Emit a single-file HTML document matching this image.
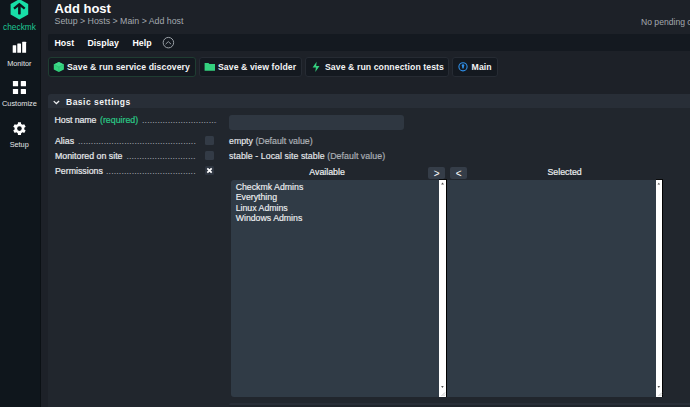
<!DOCTYPE html>
<html><head><meta charset="utf-8">
<style>
*{box-sizing:border-box;margin:0;padding:0}
html,body{width:690px;height:407px;overflow:hidden;background:#1d2128;font-family:"Liberation Sans",sans-serif;color:#e8eaed}
.abs{position:absolute}
#side{left:0;top:0;width:41px;height:407px;background:#0f161c;box-shadow:inset -1px 0 #0b1014}
.sl{position:absolute;left:0;width:40px;text-align:center;font-size:7.5px;color:#e4e6e8;white-space:nowrap}
#title{left:54.6px;top:1px;font-size:13px;font-weight:bold;color:#fff}
#crumb{left:54.6px;top:16px;font-size:8.8px;color:#a3a8ae}
#pending{left:641px;top:17.3px;font-size:8.6px;color:#a3a8ae;white-space:nowrap}
#menu{left:48px;top:34px;width:642px;height:17px;background:#141920;border-radius:2px 0 0 2px}
.mi{position:absolute;top:4.1px;font-size:8.8px;letter-spacing:0.02px;font-weight:bold;color:#fff}
.btn{position:absolute;top:57px;height:20px;background:#141920;border:1px solid #262b33;border-radius:3px}
.bt{position:absolute;top:61.7px;font-size:8.7px;letter-spacing:0.08px;font-weight:bold;color:#f2f3f4;white-space:nowrap}
#sechead{left:48px;top:93.8px;width:642px;height:14.4px;background:#282e37;border-radius:3px 0 0 0}
#content{left:48px;top:108px;width:642px;height:299px;background:#21262d}
.lbl{position:absolute;font-size:8.8px;color:#e8eaed;white-space:nowrap;-webkit-text-stroke:0.2px #e8eaed}
.dots{position:absolute;font-size:8.8px;color:#a3a9b0;white-space:nowrap;overflow:hidden;letter-spacing:0.12px;margin-top:-0.5px}
.cb{position:absolute;left:205px;width:9px;height:9px;background:#333b46;border-radius:1.5px}
.val{position:absolute;left:229px;font-size:8.8px;color:#e8eaed;white-space:nowrap;-webkit-text-stroke:0.15px #e8eaed}
.gray{color:#8f959c}
.list{position:absolute;top:180px;height:217px;background:#303b46}
.sb{position:absolute;top:179px;width:8px;height:218px;background:#fff;border-right:1px solid #000;border-top:1px solid #0a0a0a}
.arr{position:absolute;top:167px;width:17.3px;height:12px;background:#353d48;border-radius:2px;color:#fff;font-size:10px;text-align:center;line-height:14px}
.item{position:absolute;left:235.7px;font-size:8.75px;color:#eef0f2;white-space:nowrap;-webkit-text-stroke:0.15px #eef0f2}
</style></head><body>
<div id="side" class="abs">
  <svg class="abs" style="left:0;top:0" width="40" height="22" viewBox="0 0 40 22">
    <polygon points="19.4,-0.9 28.2,4 28.2,14.6 19.4,19.5 10.6,14.6 10.6,4" fill="#18dfa7"/>
    <polyline points="14.0,8.6 19.35,4.4 24.7,8.6" fill="none" stroke="#0f161c" stroke-width="2.4"/>
    <path d="M18.1 5.5 H20.7 V13.4 Q20.7 14.6 19.4 14.6 Q18.1 14.6 18.1 13.4 Z" fill="#0f161c"/>
  </svg>
  <div class="sl" style="top:22px;left:-0.5px;color:#1ec894;font-size:8.3px;letter-spacing:0.02px">checkmk</div>
  <svg class="abs" style="left:0;top:0" width="40" height="160" viewBox="0 0 40 160">
    <rect x="12.7" y="45.2" width="3.5" height="7.6" rx="0.4" fill="#fff"/>
    <rect x="17.3" y="43.5" width="3.7" height="9.3" rx="0.4" fill="#fff"/>
    <rect x="22.2" y="41.8" width="3.9" height="11" rx="0.4" fill="#fff"/>
    <rect x="12.9" y="81.1" width="5.2" height="5.1" rx="0.5" fill="#fff"/>
    <rect x="20.8" y="81.1" width="5.2" height="5.1" rx="0.5" fill="#fff"/>
    <rect x="12.9" y="88.9" width="5.2" height="5.2" rx="0.5" fill="#fff"/>
    <rect x="20.8" y="88.9" width="5.2" height="5.2" rx="0.5" fill="#fff"/>
    <path fill="#fff" d="M21.13 124.00 L20.91 122.27 L17.99 122.27 L17.77 124.00 L16.30 124.85 L14.70 124.17 L13.23 126.70 L14.62 127.75 L14.62 129.45 L13.23 130.50 L14.70 133.03 L16.30 132.35 L17.77 133.20 L17.99 134.93 L20.91 134.93 L21.13 133.20 L22.60 132.35 L24.20 133.03 L25.67 130.50 L24.28 129.45 L24.28 127.75 L25.67 126.70 L24.20 124.17 L22.60 124.85 Z"/>
    <circle cx="19.45" cy="128.6" r="2.3" fill="#0f161c"/>
  </svg>
  <div class="sl" style="top:59px;left:-0.7px;font-size:7.3px">Monitor</div>
  <div class="sl" style="top:99px;left:-0.6px;font-size:7.4px">Customize</div>
  <div class="sl" style="top:140px;left:-0.8px;font-size:7.3px">Setup</div>
</div>

<div id="title" class="abs">Add host</div>
<div id="crumb" class="abs">Setup &gt; Hosts &gt; Main &gt; Add host</div>
<div id="pending" class="abs">No pending changes</div>

<div id="menu" class="abs">
  <div class="mi" style="left:6.5px">Host</div>
  <div class="mi" style="left:39.5px">Display</div>
  <div class="mi" style="left:84.4px">Help</div>
</div>
<svg class="abs" style="left:0;top:0" width="690" height="110" viewBox="0 0 690 110">
  <circle cx="168.4" cy="42.65" r="5.25" fill="none" stroke="#9aa0a6" stroke-width="1"/>
  <polyline points="165.9,43.9 168.3,41.6 170.8,43.9" fill="none" stroke="#9aa0a6" stroke-width="0.95" stroke-linejoin="round" stroke-linecap="round"/>
</svg>

<div class="btn" style="left:48px;width:148px;border-color:#1f3d32"></div>
<svg class="abs" style="left:0;top:0" width="690" height="80" viewBox="0 0 690 80">
  <polygon points="58.85,62 63.9,64.5 63.9,69.4 58.85,71.9 53.8,69.4 53.8,64.5" fill="#33d27d"/>
  <polygon points="58.85,62 63.9,64.5 58.85,67 53.8,64.5" fill="#3fd98a"/>
  <path d="M53.8 64.5 L58.85 67 L63.9 64.5 M58.85 67 V71.9" stroke="#28b56c" stroke-width="0.6" fill="none"/>
</svg>
<div class="bt" style="left:67px">Save &amp; run service discovery</div>

<div class="btn" style="left:199px;width:103px"></div>

<div class="bt" style="left:218px">Save &amp; view folder</div>

<div class="btn" style="left:305px;width:144px"></div>
<div class="bt" style="left:325px">Save &amp; run connection tests</div>

<div class="btn" style="left:452px;width:46px"></div>
<div class="bt" style="left:471.6px">Main</div>
<svg class="abs" style="left:0;top:0" width="690" height="80" viewBox="0 0 690 80">
  <path d="M204.6 62.9 H208.4 L209.5 64 H215 V70.8 H204.6 Z" fill="#34d17f"/>
  <path d="M316.6 61.8 L312.6 67.5 L315.9 67.5 L315.3 71.9 L319.5 66.1 L316.2 66.1 Z" fill="#34d17f"/>
  <circle cx="463" cy="66.8" r="4.1" fill="none" stroke="#2f8fe8" stroke-width="1.1"/>
  <circle cx="463" cy="65.6" r="1.3" fill="#2f8fe8"/>
  <rect x="462.2" y="65.6" width="1.6" height="2.8" fill="#2f8fe8"/>
</svg>

<div id="content" class="abs"></div>
<div id="sechead" class="abs">
  <svg class="abs" style="left:0;top:0" width="20" height="15" viewBox="48 94 20 15">
    <polyline points="53.75,101.1 56.4,103.6 59.1,101.1" fill="none" stroke="#eef0f2" stroke-width="1.3"/>
  </svg>
  <div class="abs" style="left:18px;top:3px;font-size:8.5px;font-weight:bold;letter-spacing:0.5px;color:#f2f3f4">Basic settings</div>
</div>

<div class="lbl" style="left:54.6px;top:115px;letter-spacing:-0.1px">Host name</div>
<div class="lbl" style="left:100px;top:115px;color:#2bc986;-webkit-text-stroke:0.2px #2bc986">(required)</div>
<div class="dots" style="left:142px;top:115px;width:75px">..................................................</div>
<div class="abs" style="left:229px;top:115px;width:175px;height:15px;background:#2f3741;border-radius:3px"></div>

<div class="lbl" style="left:55px;top:136px">Alias</div>
<div class="dots" style="left:78px;top:136px;width:118px">..........................................................................</div>
<div class="cb" style="top:136px"></div>
<div class="val" style="top:136px">empty <span class="gray">(Default value)</span></div>

<div class="lbl" style="left:55px;top:151px">Monitored on site</div>
<div class="dots" style="left:126.4px;top:151px;width:69.6px">..........................................................................</div>
<div class="cb" style="top:151px"></div>
<div class="val" style="top:151px;letter-spacing:0.05px">stable - Local site stable <span class="gray">(Default value)</span></div>

<div class="lbl" style="left:55px;top:166px">Permissions</div>
<div class="dots" style="left:106px;top:166px;width:90px">..........................................................................</div>
<div class="cb" style="top:165.8px;background:#2e3540"></div>
<svg class="abs" style="left:205px;top:166px" width="9" height="9" viewBox="0 0 9 9">
  <path d="M2.3 2.3 L6.7 6.7 M6.7 2.3 L2.3 6.7" stroke="#fff" stroke-width="1.7"/>
</svg>

<div class="abs" style="left:309.3px;top:167px;font-size:8.8px;color:#eceef0;-webkit-text-stroke:0.2px #eceef0">Available</div>
<div class="abs" style="left:547.5px;top:167px;font-size:8.8px;color:#eceef0;-webkit-text-stroke:0.2px #eceef0">Selected</div>
<div class="arr" style="left:428px">&gt;</div>
<div class="arr" style="left:450px">&lt;</div>

<div class="list" style="left:230.5px;width:209px;border-radius:3px 0 0 3px"></div>
<div class="sb" style="left:439px"></div>
<div class="list" style="left:447px;width:209px"></div>
<div class="sb" style="left:655.7px;width:7.4px"></div>

<svg class="abs" style="left:0;top:170px" width="690" height="237" viewBox="0 170 690 237">
  <polygon points="441.1,184.6 442.55,182.6 444,184.6" fill="#505050"/>
  <polygon points="441.1,386 442.4,387.9 443.7,386" fill="#505050"/>
  <path d="M441.5 396 L445 392.5 M443.5 396 L445 394.5" stroke="#9a9a9a" stroke-width="0.6"/>
  <polygon points="657.5,184.4 658.8,182.8 660.1,184.4" fill="#505050"/>
  <polygon points="657.5,386 658.8,387.9 660.1,386" fill="#505050"/>
  <path d="M658.5 396 L662 392.5 M660.5 396 L662 394.5" stroke="#9a9a9a" stroke-width="0.6"/>
</svg>
<div class="item" style="top:182px">Checkmk Admins</div>
<div class="item" style="top:192px">Everything</div>
<div class="item" style="top:202.5px">Linux Admins</div>
<div class="item" style="top:212.5px">Windows Admins</div>

<div class="abs" style="left:229px;top:402.7px;width:461px;height:2.3px;background:#282e37;border-radius:2px 0 0 0"></div>
<div class="abs" style="left:229px;top:405px;width:461px;height:2px;background:#1f242b"></div>
</body></html>
